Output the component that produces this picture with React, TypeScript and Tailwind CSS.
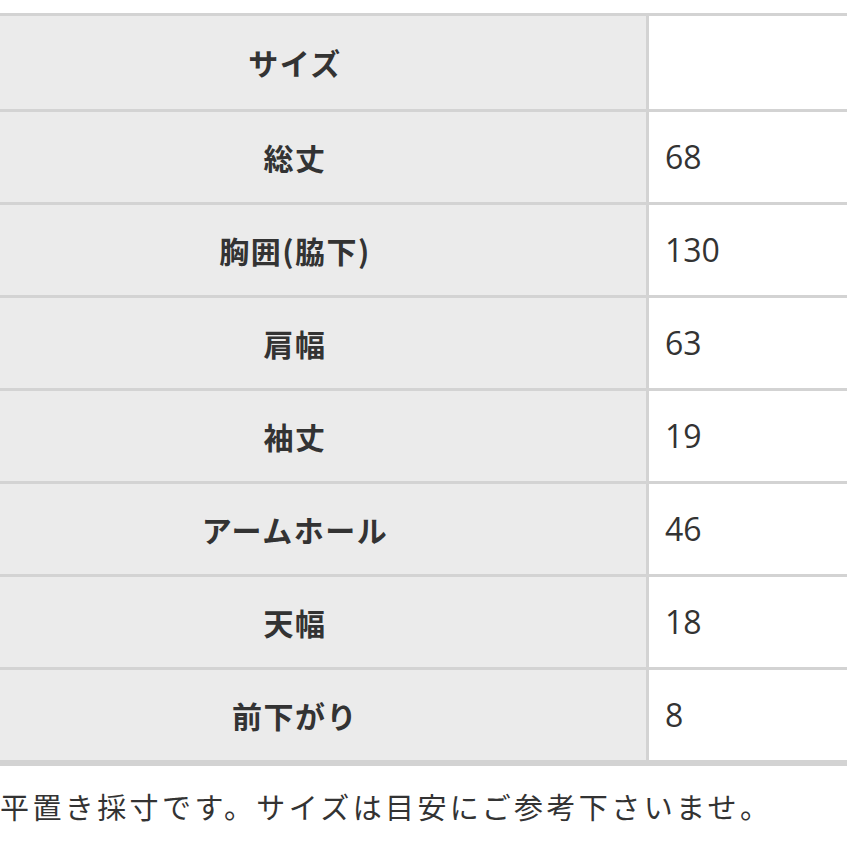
const rows: { label: string; value: string }[] = [
  { label: 'サイズ', value: '' },
  { label: '総丈', value: '68' },
  { label: '胸囲(脇下)', value: '130' },
  { label: '肩幅', value: '63' },
  { label: '袖丈', value: '19' },
  { label: 'アームホール', value: '46' },
  { label: '天幅', value: '18' },
  { label: '前下がり', value: '8' },
]

const jp = "font-['Noto_Sans_CJK_JP','Noto_Sans',sans-serif]"

export default function App() {
  return (
    <div className="w-[847px] h-[847px] overflow-hidden bg-white pt-[13px]">
      <div className="ml-[-56px] w-[1000px] border-t-[3px] border-b-[6px] border-[#d3d3d3]">
        {rows.map((row, i) => (
          <div
            key={row.label}
            className={`flex h-[93px] ${i > 0 ? 'border-t-[3px] border-[#d3d3d3]' : ''}`}
          >
            <div
              className={`w-[705px] shrink-0 bg-[#ebebeb] border-r-[3px] border-[#d3d3d3] flex items-center justify-center text-[30px] font-bold text-[#333] tracking-[1.5px] ${jp}`}
            >
              {row.label}
            </div>
            <div className="flex-1 flex items-center pl-[16px] text-[32px] text-[#333] font-['Open_Sans',sans-serif]">
              {row.value}
            </div>
          </div>
        ))}
      </div>
      <p className={`mt-[20px] leading-[40px] text-[29px] tracking-[3.4px] text-[#333] whitespace-nowrap ${jp}`}>
        平置き採寸です。サイズは目安にご参考下さいませ。
      </p>
    </div>
  )
}
